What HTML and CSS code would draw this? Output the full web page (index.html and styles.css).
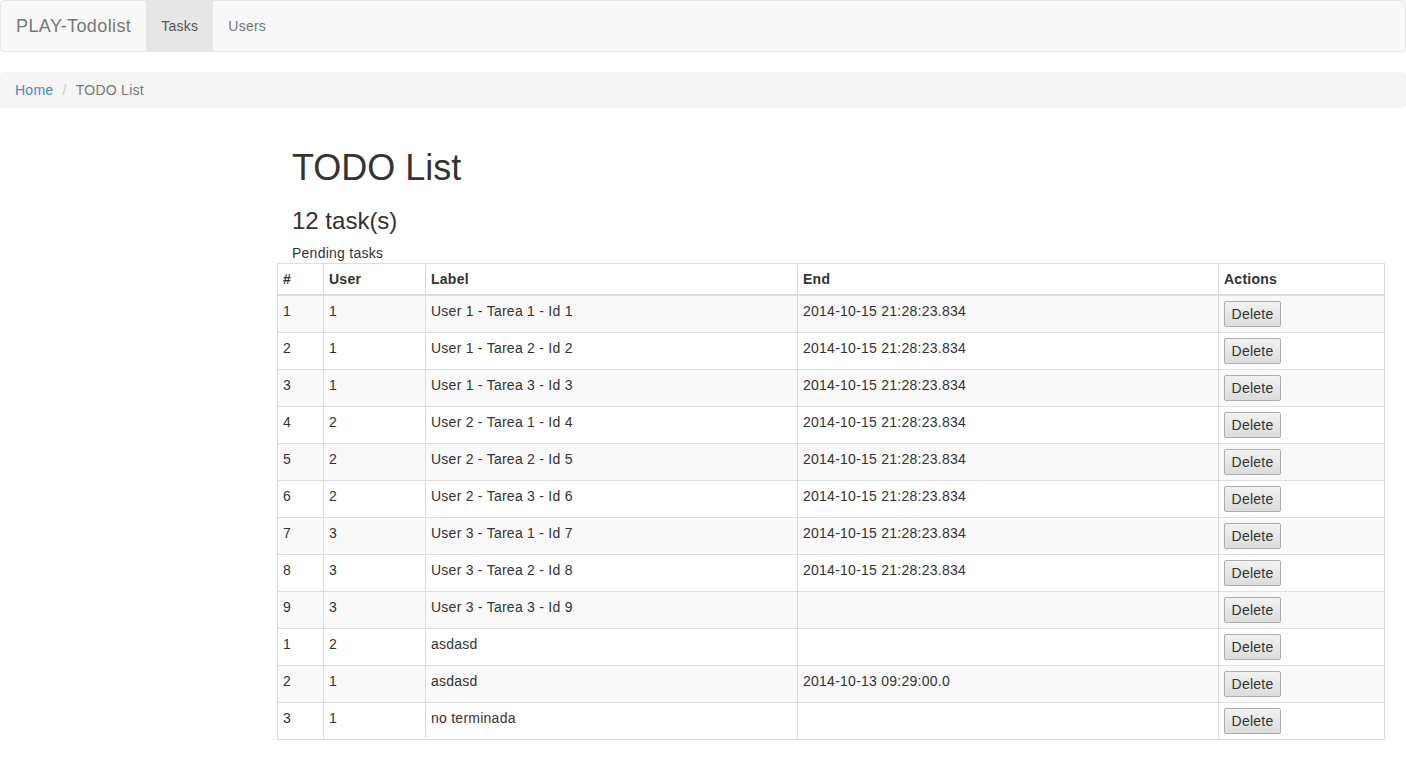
FILE: index.html
```html
<!DOCTYPE html>
<html>
<head>
<meta charset="utf-8">
<title>PLAY-Todolist</title>
<link rel="stylesheet" href="styles.css">
</head>
<body>
<nav class="navbar">
  <a class="brand" href="#">PLAY-Todolist</a>
  <ul class="nav">
    <li class="active"><a href="#">Tasks</a></li>
    <li><a href="#">Users</a></li>
  </ul>
</nav>
<ol class="breadcrumb">
  <li><a href="#">Home</a></li>
  <li class="active">TODO List</li>
</ol>
<main class="main">
  <div class="head">
    <h1>TODO List</h1>
    <h3>12 task(s)</h3>
  </div>
  <table class="table">
    <caption>Pending tasks</caption>
    <colgroup>
      <col class="c1"><col class="c2"><col class="c3"><col class="c4"><col class="c5">
    </colgroup>
    <thead>
      <tr><th>#</th><th>User</th><th>Label</th><th>End</th><th>Actions</th></tr>
    </thead>
    <tbody>
      <tr><td>1</td><td>1</td><td>User 1 - Tarea 1 - Id 1</td><td>2014-10-15 21:28:23.834</td><td><button class="btn">Delete</button></td></tr>
      <tr><td>2</td><td>1</td><td>User 1 - Tarea 2 - Id 2</td><td>2014-10-15 21:28:23.834</td><td><button class="btn">Delete</button></td></tr>
      <tr><td>3</td><td>1</td><td>User 1 - Tarea 3 - Id 3</td><td>2014-10-15 21:28:23.834</td><td><button class="btn">Delete</button></td></tr>
      <tr><td>4</td><td>2</td><td>User 2 - Tarea 1 - Id 4</td><td>2014-10-15 21:28:23.834</td><td><button class="btn">Delete</button></td></tr>
      <tr><td>5</td><td>2</td><td>User 2 - Tarea 2 - Id 5</td><td>2014-10-15 21:28:23.834</td><td><button class="btn">Delete</button></td></tr>
      <tr><td>6</td><td>2</td><td>User 2 - Tarea 3 - Id 6</td><td>2014-10-15 21:28:23.834</td><td><button class="btn">Delete</button></td></tr>
      <tr><td>7</td><td>3</td><td>User 3 - Tarea 1 - Id 7</td><td>2014-10-15 21:28:23.834</td><td><button class="btn">Delete</button></td></tr>
      <tr><td>8</td><td>3</td><td>User 3 - Tarea 2 - Id 8</td><td>2014-10-15 21:28:23.834</td><td><button class="btn">Delete</button></td></tr>
      <tr><td>9</td><td>3</td><td>User 3 - Tarea 3 - Id 9</td><td></td><td><button class="btn">Delete</button></td></tr>
      <tr><td>1</td><td>2</td><td>asdasd</td><td></td><td><button class="btn">Delete</button></td></tr>
      <tr><td>2</td><td>1</td><td>asdasd</td><td>2014-10-13 09:29:00.0</td><td><button class="btn">Delete</button></td></tr>
      <tr><td>3</td><td>1</td><td>no terminada</td><td></td><td><button class="btn">Delete</button></td></tr>
    </tbody>
  </table>
</main>
</body>
</html>
```

FILE: styles.css
```css
* { box-sizing: border-box; }
html, body { margin: 0; padding: 0; }
body {
  font-family: "Liberation Sans", Arial, Helvetica, sans-serif;
  font-size: 14px;
  line-height: 20px;
  letter-spacing: 0.25px;
  color: #333;
  background: #fff;
}
a { text-decoration: none; }

.navbar {
  display: flex;
  align-items: stretch;
  height: 52px;
  margin: 0 0 20px 0;
  background: #f8f8f8;
  border: 1px solid #e7e7e7;
  border-radius: 4px;
}
.brand {
  display: block;
  padding: 15px;
  font-size: 18px;
  line-height: 20px;
  letter-spacing: 0.4px;
  color: #777;
}
.nav {
  display: flex;
  list-style: none;
  margin: 0;
  padding: 0;
}
.nav a {
  display: block;
  padding: 15px;
  line-height: 20px;
  color: #777;
}
.nav .active a {
  background: #e7e7e7;
  color: #555;
}

.breadcrumb {
  list-style: none;
  margin: 0 0 20px 0;
  padding: 8px 15px;
  background: #f5f5f5;
  border-radius: 4px;
}
.breadcrumb li { display: inline-block; }
.breadcrumb li + li::before {
  content: "/\00a0";
  padding: 0 5px;
  color: #ccc;
}
.breadcrumb a { color: #428bca; }
.breadcrumb .active { color: #777; }

.main {
  display: flow-root;
  margin: 0 21px 0 277px;
}
.head { padding-left: 15px; letter-spacing: 0; }
h1 {
  font-size: 36px;
  font-weight: 500;
  line-height: 1.1;
  margin: 20px 0 10px;
}
h3 {
  font-size: 24px;
  font-weight: 500;
  line-height: 1.1;
  margin: 20px 0 10px;
}

.table {
  width: 1108px;
  table-layout: fixed;
  border-collapse: collapse;
  border: 1px solid #ddd;
}
.table caption {
  text-align: left;
  padding: 0 0 0 15px;
  height: 19px;
  line-height: 19px;
  color: #333;
}
.c1 { width: 46px; }
.c2 { width: 102px; }
.c3 { width: 372px; }
.c4 { width: 421px; }
.table th, .table td {
  padding: 5px;
  line-height: 20px;
  text-align: left;
  vertical-align: top;
  border: 1px solid #ddd;
}
.table th {
  vertical-align: bottom;
  border-bottom: 2px solid #ddd;
  font-weight: bold;
}
.table tbody tr:nth-child(odd) { background: #f9f9f9; }

.btn {
  font-family: inherit;
  font-size: 14px;
  line-height: 20px;
  letter-spacing: 0.25px;
  color: #333;
  height: 26px;
  width: 57px;
  padding: 1px 4px;
  margin: 0;
  border: 1px solid #acacac;
  border-radius: 2px;
  background: linear-gradient(#f2f2f2, #dcdcdc);
  display: block;
}
```
